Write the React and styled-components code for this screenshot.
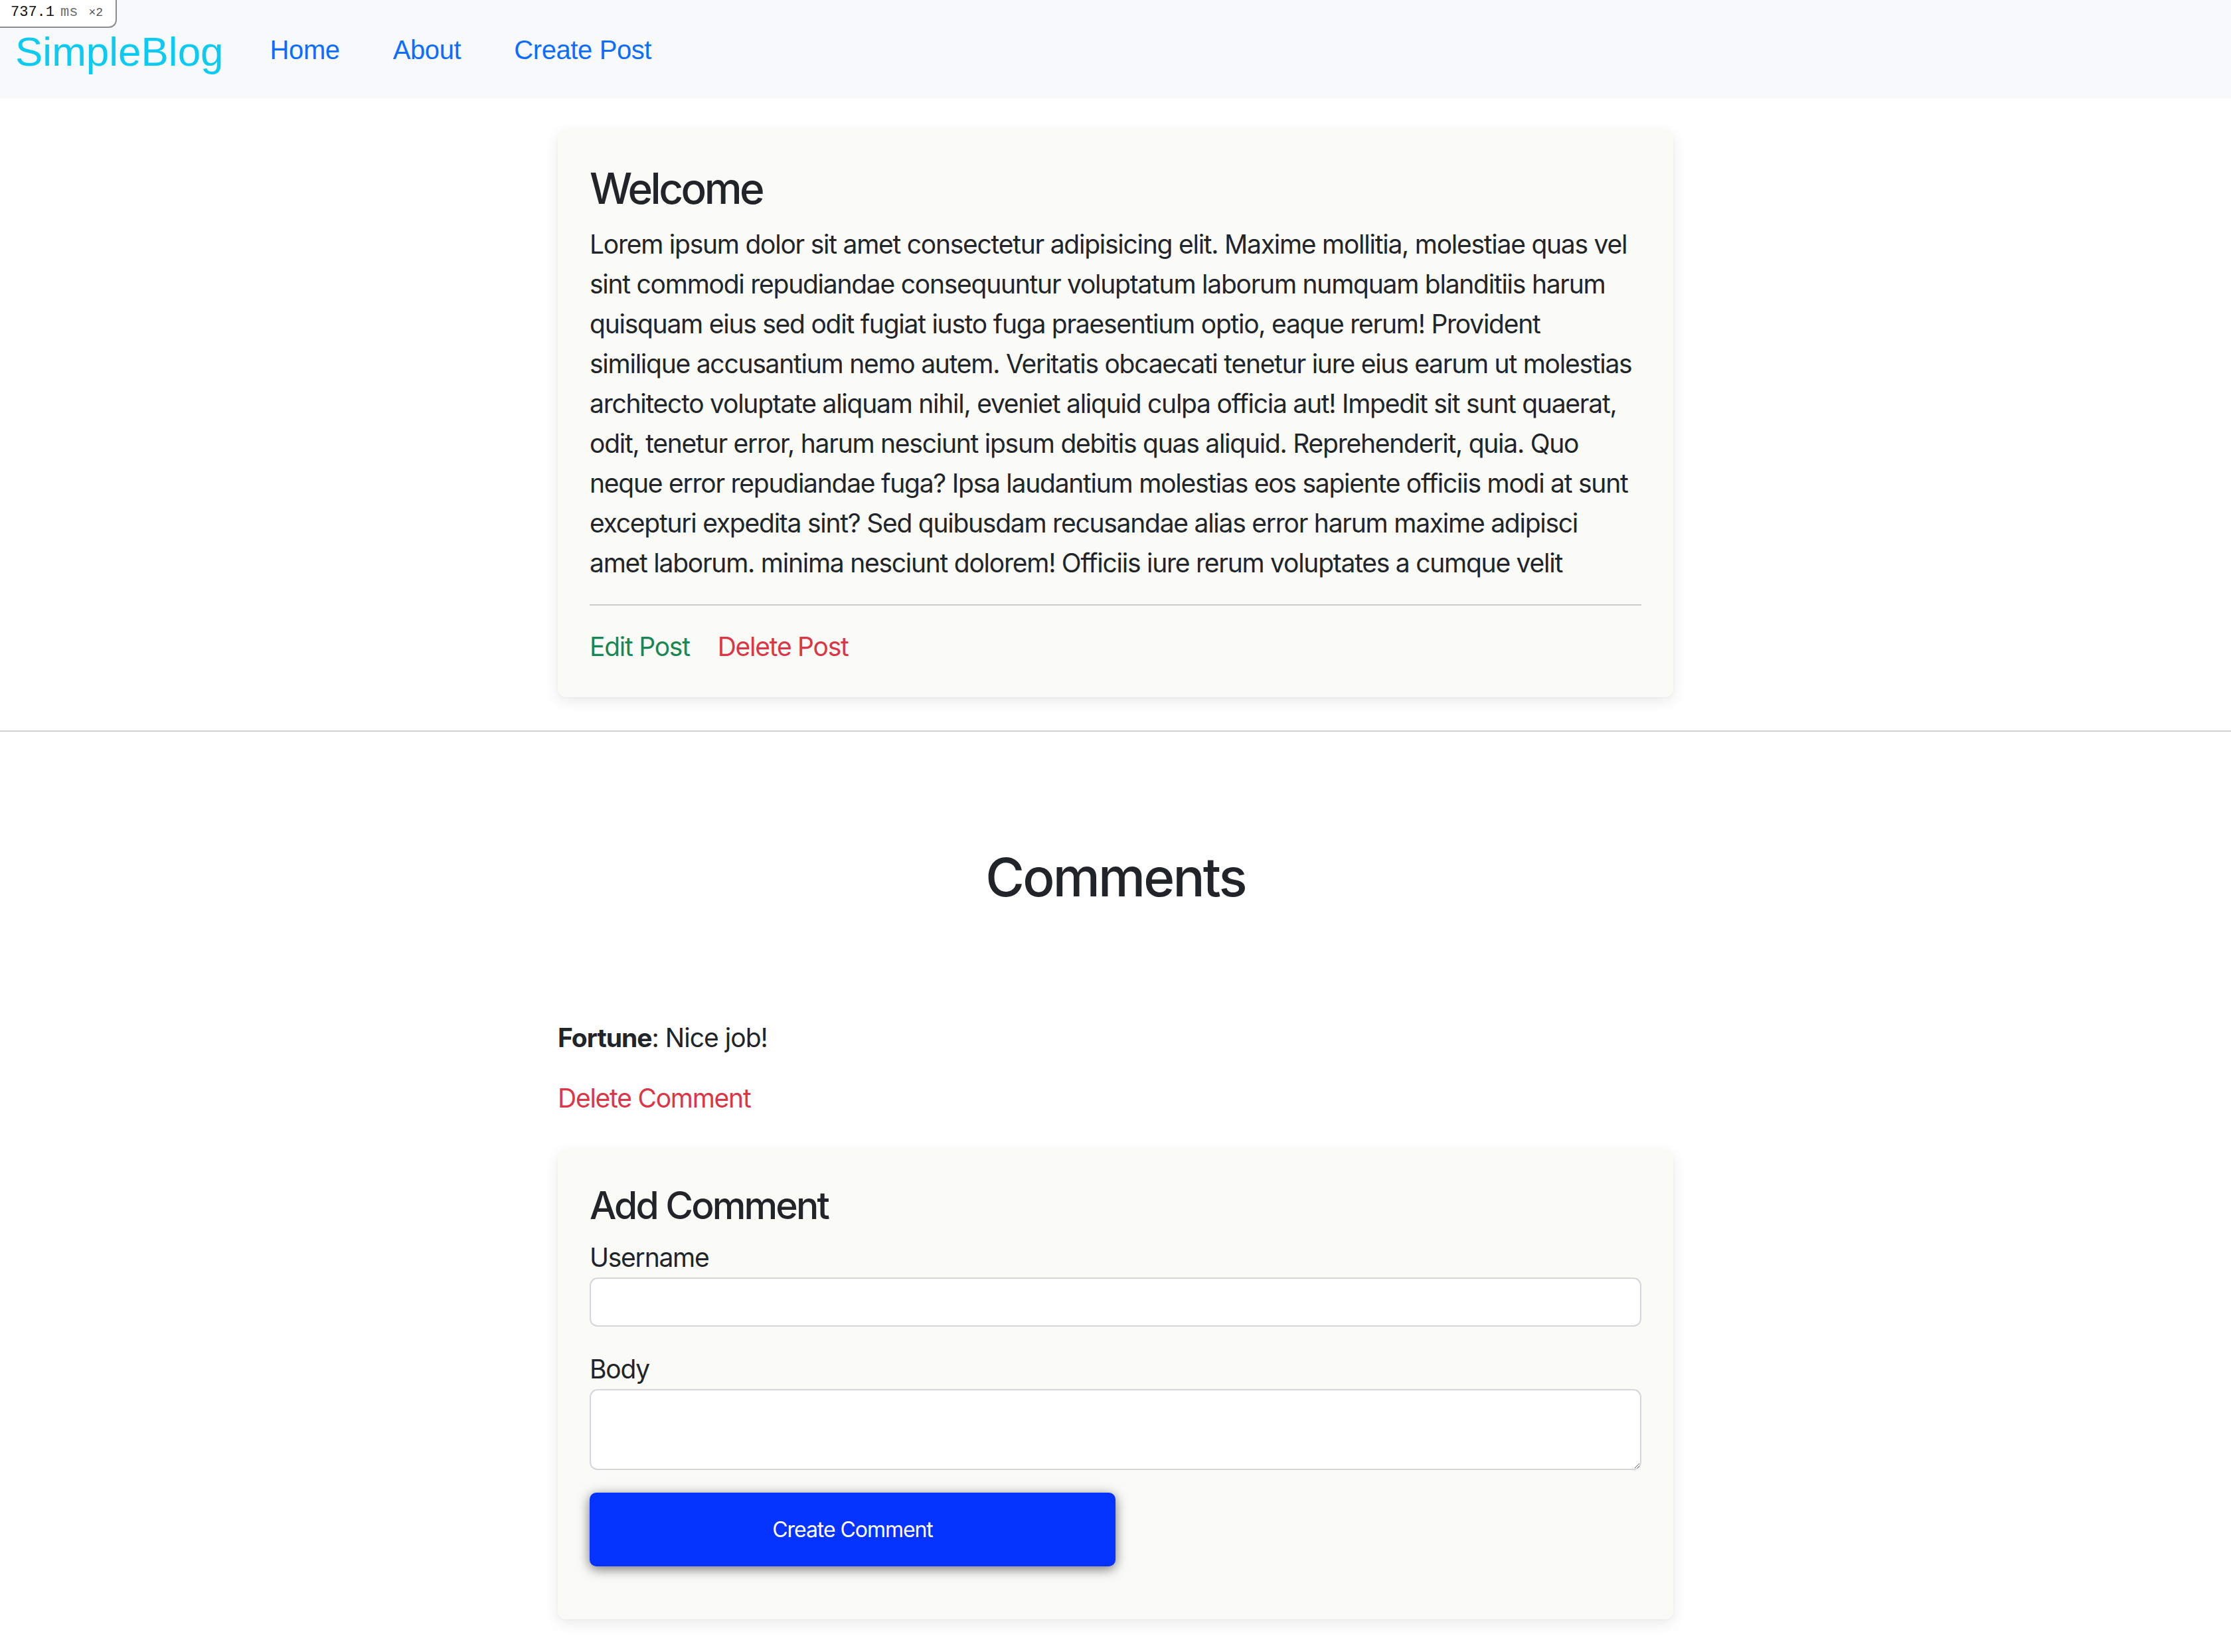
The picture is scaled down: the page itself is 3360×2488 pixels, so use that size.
import React from "react";
import styled, { createGlobalStyle } from "styled-components";

const GlobalStyle = createGlobalStyle`
  html, body {
    margin: 0;
    padding: 0;
    background: #ffffff;
  }
  body {
    font-family: Inter, "Noto Sans", "DejaVu Sans", sans-serif;
    color: #212529;
    font-size: 39px;
    line-height: 60px;
    letter-spacing: -0.032em;
  }
  * { box-sizing: border-box; }
`;

const Page = styled.div`
  position: relative;
  min-height: 2488px;
`;

const TimingBadge = styled.div`
  position: absolute;
  top: 0;
  left: 0;
  z-index: 10;
  width: 176px;
  height: 42px;
  display: flex;
  align-items: baseline;
  padding: 5px 0 0 16px;
  background: #ffffff;
  border-right: 2px solid #8c8c8c;
  border-bottom: 2px solid #8c8c8c;
  border-bottom-right-radius: 12px;
  font-family: "Liberation Mono", "DejaVu Sans Mono", monospace;
  letter-spacing: 0;
  line-height: 28px;
`;

const BadgeValue = styled.span`
  font-size: 22px;
  color: ${(p) => (p.$muted ? "#6e6e6e" : "#111111")};
  margin-left: ${(p) => p.$gap || 0}px;
`;

const BadgeScale = styled.span`
  font-size: 18px;
  color: #555555;
  margin-left: 16px;
`;

const Navbar = styled.nav`
  height: 148px;
  display: flex;
  align-items: center;
  padding: 0 23px;
  background: #f8f9fa;
  font-family: "Liberation Sans", Arial, sans-serif;
  letter-spacing: 0;
`;

const Brand = styled.a`
  font-size: 62px;
  line-height: 90px;
  padding-top: 8px;
  margin-right: 30px;
  color: #0dcaf0;
  text-decoration: none;
`;

const NavList = styled.div`
  display: flex;
  align-items: center;
`;

const NavLink = styled.a`
  font-size: 40px;
  line-height: 60px;
  padding: 2px 40px 0;
  color: #0d6efd;
  text-decoration: none;
  letter-spacing: -0.01em;
`;

const Column = styled.main`
  width: 1680px;
  margin: 0 auto;
  padding-top: 48px;
`;

const Card = styled.section`
  background: #fafaf6;
  border-radius: 12px;
  box-shadow: 0 6px 22px rgba(0, 0, 0, 0.085), 0 1px 3px rgba(0, 0, 0, 0.04);
  padding: 48px 48px ${(p) => p.$bottom || 48}px;
  margin-bottom: ${(p) => p.$gap || 0}px;
`;

const PostTitle = styled.h3`
  margin: 0 0 14px;
  font-size: 64px;
  line-height: 80px;
  font-weight: 500;
  letter-spacing: -0.055em;
`;

const PostBody = styled.p`
  margin: 0;
  white-space: nowrap;
`;

const Rule = styled.hr`
  margin: 32px 0;
  border: 0;
  height: 2px;
  background: #cccccc;
`;

const Actions = styled.div`
  display: flex;
  gap: 42px;
`;

const TextLink = styled.a`
  color: ${(p) => (p.$tone === "success" ? "#198754" : "#dc3545")};
  text-decoration: none;
`;

const Divider = styled.hr`
  margin: 0;
  border: 0;
  height: 2px;
  background: #d2d2d2;
`;

const CommentsColumn = styled.section`
  width: 1680px;
  margin: 0 auto;
  padding-top: 171px;
`;

const SectionTitle = styled.h2`
  margin: 0 0 164px;
  text-align: center;
  font-size: 80px;
  line-height: 96px;
  font-weight: 500;
  letter-spacing: -0.035em;
`;

const CommentText = styled.p`
  margin: 0 0 31px;
  letter-spacing: -0.025em;
`;

const Author = styled.strong`
  font-weight: 700;
`;

const CommentActions = styled.div`
  margin-bottom: 48px;
`;

const FormTitle = styled.h4`
  margin: 0 0 12px;
  font-size: 57px;
  line-height: 72px;
  font-weight: 500;
  letter-spacing: -0.05em;
`;

const Field = styled.div`
  margin-bottom: ${(p) => p.$gap || 0}px;
`;

const Label = styled.label`
  display: block;
`;

const TextInput = styled.input`
  display: block;
  width: 100%;
  height: 74px;
  padding: 0 24px;
  background: #ffffff;
  border: 2px solid #d3d6dc;
  border-radius: 12px;
  font: inherit;
  outline: none;
`;

const TextArea = styled.textarea`
  display: block;
  width: 100%;
  height: 122px;
  padding: 12px 24px;
  background: #ffffff;
  border: 2px solid #d3d6dc;
  border-radius: 12px;
  font: inherit;
  resize: vertical;
  outline: none;
`;

const SubmitButton = styled.button`
  display: block;
  width: 50%;
  height: 111px;
  margin-top: 34px;
  border: 0;
  border-radius: 10px;
  background: #0433ff;
  color: #ffffff;
  font-family: Inter, "Noto Sans", sans-serif;
  font-size: 32px;
  letter-spacing: -0.033em;
  box-shadow: 0 4px 18px rgba(0, 0, 0, 0.55);
  cursor: pointer;
`;

const bodyLines = [
  "Lorem ipsum dolor sit amet consectetur adipisicing elit. Maxime mollitia, molestiae quas vel",
  "sint commodi repudiandae consequuntur voluptatum laborum numquam blanditiis harum",
  "quisquam eius sed odit fugiat iusto fuga praesentium optio, eaque rerum! Provident",
  "similique accusantium nemo autem. Veritatis obcaecati tenetur iure eius earum ut molestias",
  "architecto voluptate aliquam nihil, eveniet aliquid culpa officia aut! Impedit sit sunt quaerat,",
  "odit, tenetur error, harum nesciunt ipsum debitis quas aliquid. Reprehenderit, quia. Quo",
  "neque error repudiandae fuga? Ipsa laudantium molestias eos sapiente officiis modi at sunt",
  "excepturi expedita sint? Sed quibusdam recusandae alias error harum maxime adipisci",
  "amet laborum. minima nesciunt dolorem! Officiis iure rerum voluptates a cumque velit",
];

export default function App() {
  return (
    <Page>
      <GlobalStyle />
      <TimingBadge>
        <BadgeValue>737.1</BadgeValue>
        <BadgeValue $muted $gap={9}>ms</BadgeValue>
        <BadgeScale>×2</BadgeScale>
      </TimingBadge>

      <Navbar>
        <Brand href="#">SimpleBlog</Brand>
        <NavList>
          <NavLink href="#">Home</NavLink>
          <NavLink href="#">About</NavLink>
          <NavLink href="#">Create Post</NavLink>
        </NavList>
      </Navbar>

      <Column>
        <Card $bottom={46} $gap={50}>
          <PostTitle>Welcome</PostTitle>
          <PostBody>
            {bodyLines.map((line, i) => (
              <React.Fragment key={i}>
                {line}
                {i < bodyLines.length - 1 && <br />}
              </React.Fragment>
            ))}
          </PostBody>
          <Rule />
          <Actions>
            <TextLink href="#" $tone="success">Edit Post</TextLink>
            <TextLink href="#" $tone="danger">Delete Post</TextLink>
          </Actions>
        </Card>
      </Column>

      <Divider />

      <CommentsColumn>
        <SectionTitle>Comments</SectionTitle>
        <CommentText>
          <Author>Fortune</Author>: Nice job!
        </CommentText>
        <CommentActions>
          <TextLink href="#" $tone="danger">Delete Comment</TextLink>
        </CommentActions>

        <Card $bottom={80}>
          <FormTitle>Add Comment</FormTitle>
          <Field $gap={34}>
            <Label htmlFor="username">Username</Label>
            <TextInput id="username" type="text" />
          </Field>
          <Field>
            <Label htmlFor="body">Body</Label>
            <TextArea id="body" />
          </Field>
          <SubmitButton type="button">Create Comment</SubmitButton>
        </Card>
      </CommentsColumn>
    </Page>
  );
}
